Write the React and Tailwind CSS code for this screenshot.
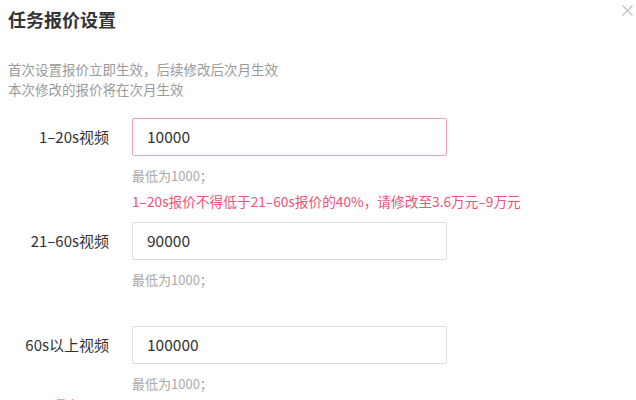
import React from "react";

const font = { fontFamily: '"Noto Sans CJK SC", "Noto Sans", sans-serif' };

function Row({ label, value, error, children }) {
  return (
    <div>
      <div className="flex items-center gap-[23px]">
        <div className="w-[109px] text-right text-[15px] leading-[20px] text-[#333]">{label}</div>
        <div
          className={`w-[315px] h-[38px] flex items-center pl-[14px] rounded-[2px] border text-[15.5px] text-[#333] ${
            error ? "border-[#eb9fb3]" : "border-[#dddddd]"
          }`}
        >
          {value}
        </div>
      </div>
      <div className="ml-[132px] mt-[10px] text-[13px] leading-[20px] text-[#a9a9a9]">最低为1000；</div>
      {children}
    </div>
  );
}

export default function App() {
  return (
    <div className="relative w-[636px] h-[400px] overflow-hidden bg-white" style={font}>
      <div className="absolute right-[3px] top-[5px]">
        <svg width="11" height="11" viewBox="0 0 11 11" fill="none" stroke="#bdbdbd" strokeWidth="1.1">
          <path d="M0.5 0.5 L10.5 10.5 M10.5 0.5 L0.5 10.5" />
        </svg>
      </div>
      <div className="pl-[8px] pt-[8px]">
        <div className="text-[18px] leading-[22px] font-bold text-[#333]">任务报价设置</div>
        <div className="mt-[29px] text-[13.5px] leading-[20px] text-[#9a9a9a]">
          <div>首次设置报价立即生效，后续修改后次月生效</div>
          <div>本次修改的报价将在次月生效</div>
        </div>
      </div>
      <div className="mt-[19px]">
        <Row label="1–20s视频" value="10000" error>
          <div className="ml-[132px] mt-[5px] text-[13.7px] leading-[20px] text-[#ec5378]">
            1–20s报价不得低于21–60s报价的40%，请修改至3.6万元–9万元
          </div>
        </Row>
        <div className="mt-[11px]">
          <Row label="21–60s视频" value="90000" />
        </div>
        <div className="mt-[36px]">
          <Row label="60s以上视频" value="100000" />
        </div>
        <div className="ml-[55px] mt-[3px] text-[12px] leading-[16px] text-[#ec5378]">最高价</div>
      </div>
    </div>
  );
}
